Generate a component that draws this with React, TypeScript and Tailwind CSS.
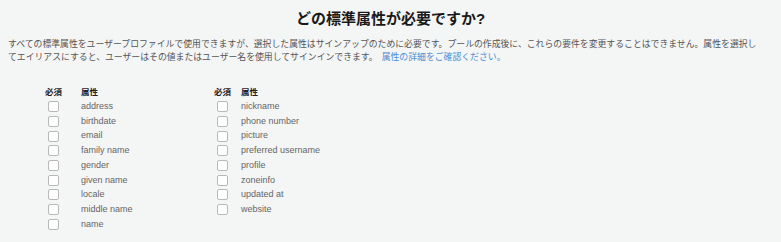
const leftAttrs = [
  'address',
  'birthdate',
  'email',
  'family name',
  'gender',
  'given name',
  'locale',
  'middle name',
  'name',
];

const rightAttrs = [
  'nickname',
  'phone number',
  'picture',
  'preferred username',
  'profile',
  'zoneinfo',
  'updated at',
  'website',
];

const AttrTable = ({ attrs, reqWidth, width }: { attrs: string[]; reqWidth: string; width: string }) => (
  <div className={width}>
    <div className="flex h-[15px] items-center text-[8.5px] font-bold text-[#222]">
      <div className={reqWidth}>必須</div>
      <div>属性</div>
    </div>
    {attrs.map((a) => (
      <div key={a} className="flex h-[14.7px] items-center">
        <div className={reqWidth}>
          <div className="ml-[3px] h-[11px] w-[11px] rounded-[2px] border border-[#b8b8b8] bg-white" />
        </div>
        <div className="text-[9px] text-[#666]" style={{ fontFamily: '"Liberation Sans", Arial, sans-serif' }}>
          {a}
        </div>
      </div>
    ))}
  </div>
);

export default function App() {
  return (
    <div
      className="h-[242px] w-full bg-[#f4f5f5]"
      style={{ fontFamily: '"Liberation Sans", "Noto Sans CJK JP", sans-serif' }}
    >
      <h1 className="pt-[10px] text-center text-[15px] font-bold leading-[18px] text-[#1a1a1a]">
        どの標準属性が必要ですか?
      </h1>
      <p className="mt-[9.5px] pl-2 pr-[20px] text-[8.85px] leading-[13.5px] text-[#555]">
        すべての標準属性をユーザープロファイルで使用できますが、選択した属性はサインアップのために必要です。プールの作成後に、これらの要件を変更することはできません。属性を選択してエイリアスにすると、ユーザーはその値またはユーザー名を使用してサインインできます。
        <a href="#" className="ml-[4px] text-[#4a8fd6]">
          属性の詳細をご確認ください。
        </a>
      </p>
      <div className="mt-[20px] flex pl-[45px]">
        <AttrTable attrs={leftAttrs} reqWidth="w-[36px]" width="w-[169px]" />
        <AttrTable attrs={rightAttrs} reqWidth="w-[27px]" width="w-[200px]" />
      </div>
    </div>
  );
}
